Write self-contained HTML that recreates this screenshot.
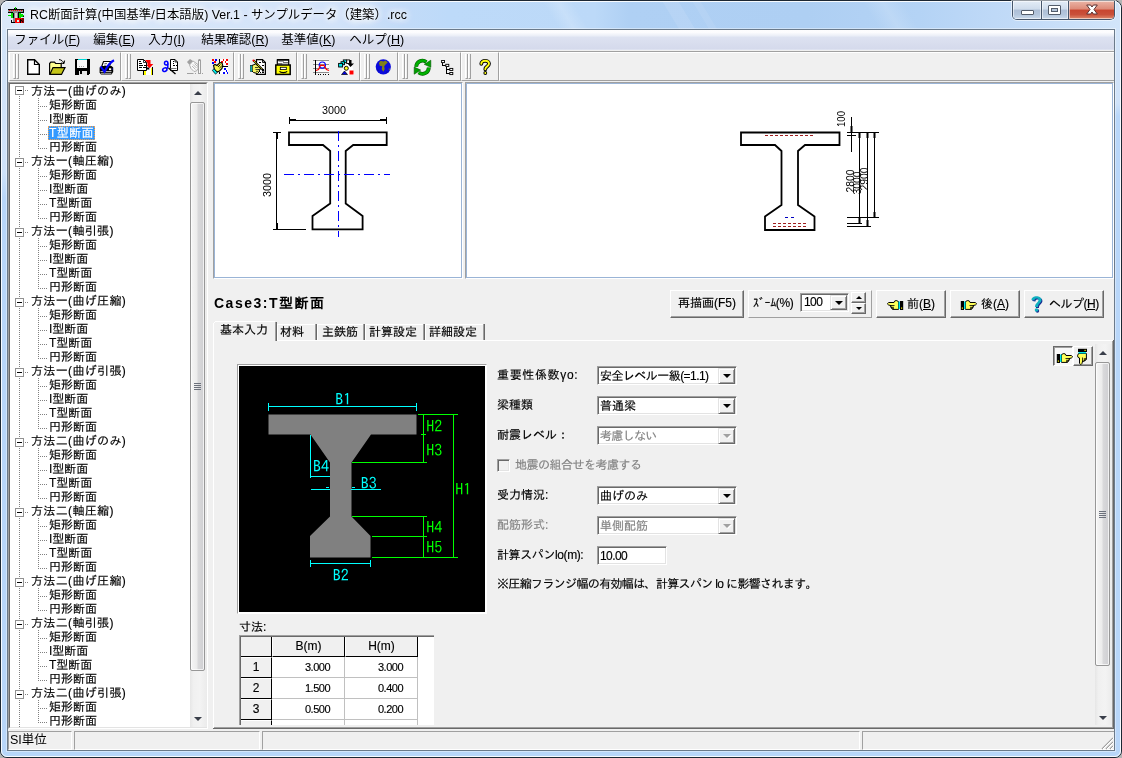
<!DOCTYPE html>
<html lang="ja">
<head>
<meta charset="utf-8">
<title>RC断面計算(中国基準/日本語版) Ver.1</title>
<style>
*{box-sizing:border-box;margin:0;padding:0}
html,body{width:1122px;height:758px;overflow:hidden;background:#b4b4b4}
body{will-change:transform;-webkit-text-stroke:.15px;font-family:"Liberation Sans","IPAGothic",sans-serif;font-size:12px;color:#000;position:relative;line-height:1}
div,span,svg,i,b,u{position:absolute;display:block;white-space:nowrap}
u{position:static;display:inline;text-decoration:underline}
#win{left:0;top:0;width:1122px;height:758px;border:1px solid #1c2733;border-radius:8px 8px 7px 7px;background:#b8d6f9;overflow:hidden}
#tbar{left:1px;top:1px;width:1120px;height:29px;overflow:hidden;border-radius:7px 7px 0 0;background:linear-gradient(90deg,#dce9f9 0,#d2e3f9 30%,#c2dbf8 36%,#bddaf9 40%,#bcd9f8 53%,#afd0f4 56%,#aecff3 72%,#b4d3f5 82%,#c4dcf8 92%,#d2e5fa 100%)}
#tbar i{top:-2px;height:34px;transform:skewX(31deg);transform-origin:0 0}
.fl{background:linear-gradient(#d2e4f9 0,#cfe2f9 85%,#b8d6f9 100%)}
#winhi{left:1px;top:1px;width:1120px;height:756px;border:1px solid rgba(255,255,255,.9);border-radius:7px 7px 6px 6px}
#ttl{-webkit-text-stroke:0;left:30px;top:5px;text-shadow:0 0 7px #fff,0 0 7px #fff,0 0 10px #fff,0 0 12px #fff;font-family:"Liberation Sans","Noto Sans CJK JP",sans-serif;font-size:12.400px;line-height:20px;color:#000}
#client{left:7px;top:29px;width:1108px;height:722px;border:1px solid #6b7a8a;background:#f0f0f0;box-shadow:0 0 0 1px rgba(255,255,255,.4)}
#menubar{left:8px;top:30px;width:1106px;height:20px;background:linear-gradient(#fdfdfe 0,#fcfcfe 12%,#e8ecf6 31%,#dde2f1 35%,#d5daec 93%,#e2e6f2 100%)}
.mi{-webkit-text-stroke:0;top:30px;height:20px;line-height:20px;font-family:"Liberation Sans","Noto Sans CJK JP",sans-serif;font-size:12.5px}
.ln{background:#a0a0a0}
.wl{background:#fff}
</style>
</head>
<body>
<div id="win"></div>
<div id="tbar"><i style="left:540px;width:30px;background:linear-gradient(90deg,rgba(255,255,255,0),rgba(255,255,255,.18) 50%,rgba(255,255,255,0))"></i><i style="left:660px;width:16px;background:rgba(255,255,255,.10)"></i><i style="left:690px;width:8px;background:rgba(255,255,255,.08)"></i><i style="left:860px;width:40px;background:linear-gradient(90deg,rgba(255,255,255,0),rgba(255,255,255,.15) 50%,rgba(255,255,255,0))"></i></div>
<div class="fl" style="left:2px;top:30px;width:5px;height:168px"></div>
<div class="fl" style="left:1115px;top:30px;width:5px;height:86px"></div>
<div id="winhi"></div>
<div id="ttl">RC断面計算(中国基準/日本語版) Ver.1 - サンプルデータ（建築）.rcc</div>
<div id="client"></div>
<svg style="left:8px;top:7px" width="16" height="16" viewBox="0 0 16 16" shape-rendering="crispEdges"><rect x="6" y="1" width="3" height="1" fill="#000"/><rect x="7" y="0" width="1" height="2" fill="#00e000"/><rect x="0" y="2" width="16" height="4" fill="#000"/><rect x="0" y="3" width="15" height="2" fill="#909090"/><path d="M1 3.500h14" stroke="#ff0000" stroke-width="1" stroke-dasharray="1 1"/><rect x="5" y="5" width="5" height="11" fill="#8c8c8c"/><rect x="7" y="6" width="1.500" height="9" fill="#d8d8d8"/><rect x="5" y="6" width="1" height="5" fill="#000"/><rect x="10" y="6" width="1" height="5" fill="#000"/><rect x="3" y="6" width="2" height="5" fill="#00e000"/><rect x="10.500" y="6" width="2" height="5" fill="#00e000"/><rect x="0" y="8" width="3" height="1" fill="#00e000"/><path d="M12 8.500h4M14 7v3" stroke="#00e000" stroke-width="1.400"/><rect x="15" y="8.500" width="1" height="1.500" fill="#000"/><path d="M3.500 13v2.500h4" fill="none" stroke="#000" stroke-width="1"/><rect x="7" y="11" width="9" height="5" fill="#ff0000"/><rect x="8.500" y="12.500" width="2" height="2" fill="#c8f0f0"/><path d="M12.500 16V12l2.500 3.500V11" fill="none" stroke="#000" stroke-width="1" shape-rendering="auto"/></svg>
<div id="menubar"></div>
<div class="mi" style="left:14.3px">ファイル(<u>F</u>)</div>
<div class="mi" style="left:93.3px">編集(<u>E</u>)</div>
<div class="mi" style="left:148.3px">入力(<u>I</u>)</div>
<div class="mi" style="left:201.3px">結果確認(<u>R</u>)</div>
<div class="mi" style="left:281.3px">基準値(<u>K</u>)</div>
<div class="mi" style="left:349.3px">ヘルプ(<u>H</u>)</div>
<style>
#cap{left:1012px;top:1px;width:103px;height:19px;border:1px solid #46566b;border-top:0;border-radius:0 0 5px 5px;overflow:hidden;box-shadow:0 0 0 1px rgba(255,255,255,.55)}
.cpb{top:0;height:18px;background:linear-gradient(#e3ecf6 0,#cfdcec 45%,#aebfd6 50%,#b4c6dc 75%,#cbdaeb 100%);box-shadow:inset 0 0 0 1px rgba(255,255,255,.55)}
#cpx{background:linear-gradient(#eab4a6 0,#dd8a78 45%,#c8452f 50%,#c9503a 75%,#de8a6c 100%)}
</style>
<div id="cap">
<div class="cpb" style="left:0;width:28px"></div>
<div class="cpb" style="left:29px;width:26px;"></div>
<div class="cpb" id="cpx" style="left:56px;width:46px"></div>
<i style="left:28px;top:0;width:1px;height:19px;background:#46566b"></i>
<i style="left:55px;top:0;width:1px;height:19px;background:#46566b"></i>
<i style="left:8px;top:9px;width:13px;height:5px;background:#fff;border:1px solid #535c6a;border-radius:1px"></i>
<i style="left:35px;top:4px;width:13px;height:10px;background:#fff;border:1px solid #535c6a;border-radius:1px"></i>
<i style="left:38px;top:7px;width:7px;height:4px;background:#b4c4d8;border:1px solid #535c6a"></i>
<svg style="left:73px;top:3px" width="12" height="11" viewBox="0 0 12 11"><path d="M.7 1H4.600L6 3L7.400 1H11.300L8 5.500L11.300 10H7.400L6 8L4.600 10H.7L4 5.500Z" fill="#fff" stroke="#5a3030" stroke-width="1"/></svg>
</div>
<style>
#treeborder{left:8px;top:82px;width:200px;height:647px;background:#fff;border:1px solid;border-color:#a0a0a0 #fff #fff #a0a0a0}
#treeborder:after{content:"";position:absolute;left:0;top:0;right:0;bottom:0;border:1px solid;border-color:#696969 #e3e3e3 #e3e3e3 #696969}
#tree{left:8px;top:84px;width:182px;height:643px;overflow:hidden;font-size:12px}
.tp{left:23px;height:14px;line-height:14px;letter-spacing:.35px}
.tc{left:40px;padding:0 1px;height:14px;line-height:14px}
.sel{background:#3399ff;color:#fff;letter-spacing:.4px;outline:1px dotted #f0a050;outline-offset:-1px}
.pb{left:7px;width:9px;height:9px;border:1px solid #919191;background:#fff}
.pb:after{content:"";position:absolute;left:1px;top:3px;width:5px;height:1px;background:#000}
.hd{height:1px;background:repeating-linear-gradient(90deg,#808080 0 1px,transparent 1px 2px)}
.vd{width:1px;background:repeating-linear-gradient(#808080 0 1px,transparent 1px 2px)}
</style>
<div id="treeborder"></div>
<div id="tree">
<i class="vd" style="left:11px;top:12px;height:632px"></i>
<i class="pb" style="top:2px"></i><i class="hd" style="left:17px;top:6px;width:4px"></i><div class="tp" style="top:0px">方法一(曲げのみ)</div>
<i class="hd" style="left:32px;top:22px;width:8px"></i><div class="tc" style="top:14px">矩形断面</div>
<i class="hd" style="left:32px;top:36px;width:8px"></i><div class="tc" style="top:28px">I型断面</div>
<i class="hd" style="left:32px;top:50px;width:8px"></i><div class="tc sel" style="top:42px">T型断面</div>
<i class="hd" style="left:32px;top:64px;width:8px"></i><div class="tc" style="top:56px">円形断面</div>
<i class="vd" style="left:30px;top:14px;height:51px"></i>
<i class="pb" style="top:74px"></i><i class="hd" style="left:17px;top:78px;width:4px"></i><div class="tp" style="top:70px">方法一(軸圧縮)</div>
<i class="hd" style="left:32px;top:92px;width:8px"></i><div class="tc" style="top:84px">矩形断面</div>
<i class="hd" style="left:32px;top:106px;width:8px"></i><div class="tc" style="top:98px">I型断面</div>
<i class="hd" style="left:32px;top:120px;width:8px"></i><div class="tc" style="top:112px">T型断面</div>
<i class="hd" style="left:32px;top:134px;width:8px"></i><div class="tc" style="top:126px">円形断面</div>
<i class="vd" style="left:30px;top:84px;height:51px"></i>
<i class="pb" style="top:144px"></i><i class="hd" style="left:17px;top:148px;width:4px"></i><div class="tp" style="top:140px">方法一(軸引張)</div>
<i class="hd" style="left:32px;top:162px;width:8px"></i><div class="tc" style="top:154px">矩形断面</div>
<i class="hd" style="left:32px;top:176px;width:8px"></i><div class="tc" style="top:168px">I型断面</div>
<i class="hd" style="left:32px;top:190px;width:8px"></i><div class="tc" style="top:182px">T型断面</div>
<i class="hd" style="left:32px;top:204px;width:8px"></i><div class="tc" style="top:196px">円形断面</div>
<i class="vd" style="left:30px;top:154px;height:51px"></i>
<i class="pb" style="top:214px"></i><i class="hd" style="left:17px;top:218px;width:4px"></i><div class="tp" style="top:210px">方法一(曲げ圧縮)</div>
<i class="hd" style="left:32px;top:232px;width:8px"></i><div class="tc" style="top:224px">矩形断面</div>
<i class="hd" style="left:32px;top:246px;width:8px"></i><div class="tc" style="top:238px">I型断面</div>
<i class="hd" style="left:32px;top:260px;width:8px"></i><div class="tc" style="top:252px">T型断面</div>
<i class="hd" style="left:32px;top:274px;width:8px"></i><div class="tc" style="top:266px">円形断面</div>
<i class="vd" style="left:30px;top:224px;height:51px"></i>
<i class="pb" style="top:284px"></i><i class="hd" style="left:17px;top:288px;width:4px"></i><div class="tp" style="top:280px">方法一(曲げ引張)</div>
<i class="hd" style="left:32px;top:302px;width:8px"></i><div class="tc" style="top:294px">矩形断面</div>
<i class="hd" style="left:32px;top:316px;width:8px"></i><div class="tc" style="top:308px">I型断面</div>
<i class="hd" style="left:32px;top:330px;width:8px"></i><div class="tc" style="top:322px">T型断面</div>
<i class="hd" style="left:32px;top:344px;width:8px"></i><div class="tc" style="top:336px">円形断面</div>
<i class="vd" style="left:30px;top:294px;height:51px"></i>
<i class="pb" style="top:354px"></i><i class="hd" style="left:17px;top:358px;width:4px"></i><div class="tp" style="top:350px">方法二(曲げのみ)</div>
<i class="hd" style="left:32px;top:372px;width:8px"></i><div class="tc" style="top:364px">矩形断面</div>
<i class="hd" style="left:32px;top:386px;width:8px"></i><div class="tc" style="top:378px">I型断面</div>
<i class="hd" style="left:32px;top:400px;width:8px"></i><div class="tc" style="top:392px">T型断面</div>
<i class="hd" style="left:32px;top:414px;width:8px"></i><div class="tc" style="top:406px">円形断面</div>
<i class="vd" style="left:30px;top:364px;height:51px"></i>
<i class="pb" style="top:424px"></i><i class="hd" style="left:17px;top:428px;width:4px"></i><div class="tp" style="top:420px">方法二(軸圧縮)</div>
<i class="hd" style="left:32px;top:442px;width:8px"></i><div class="tc" style="top:434px">矩形断面</div>
<i class="hd" style="left:32px;top:456px;width:8px"></i><div class="tc" style="top:448px">I型断面</div>
<i class="hd" style="left:32px;top:470px;width:8px"></i><div class="tc" style="top:462px">T型断面</div>
<i class="hd" style="left:32px;top:484px;width:8px"></i><div class="tc" style="top:476px">円形断面</div>
<i class="vd" style="left:30px;top:434px;height:51px"></i>
<i class="pb" style="top:494px"></i><i class="hd" style="left:17px;top:498px;width:4px"></i><div class="tp" style="top:490px">方法二(曲げ圧縮)</div>
<i class="hd" style="left:32px;top:512px;width:8px"></i><div class="tc" style="top:504px">矩形断面</div>
<i class="hd" style="left:32px;top:526px;width:8px"></i><div class="tc" style="top:518px">円形断面</div>
<i class="vd" style="left:30px;top:504px;height:23px"></i>
<i class="pb" style="top:536px"></i><i class="hd" style="left:17px;top:540px;width:4px"></i><div class="tp" style="top:532px">方法二(軸引張)</div>
<i class="hd" style="left:32px;top:554px;width:8px"></i><div class="tc" style="top:546px">矩形断面</div>
<i class="hd" style="left:32px;top:568px;width:8px"></i><div class="tc" style="top:560px">I型断面</div>
<i class="hd" style="left:32px;top:582px;width:8px"></i><div class="tc" style="top:574px">T型断面</div>
<i class="hd" style="left:32px;top:596px;width:8px"></i><div class="tc" style="top:588px">円形断面</div>
<i class="vd" style="left:30px;top:546px;height:51px"></i>
<i class="pb" style="top:606px"></i><i class="hd" style="left:17px;top:610px;width:4px"></i><div class="tp" style="top:602px">方法二(曲げ引張)</div>
<i class="hd" style="left:32px;top:624px;width:8px"></i><div class="tc" style="top:616px">矩形断面</div>
<i class="hd" style="left:32px;top:638px;width:8px"></i><div class="tc" style="top:630px">円形断面</div>
<i class="vd" style="left:30px;top:616px;height:23px"></i>
</div>
<style>
.tbl{top:51px;height:1px;left:8px;width:1106px;background:#a0a0a0}
.band{top:52px;height:29px;border-top:1px solid #fff;border-left:1px solid #fff;border-right:1px solid #a0a0a0;border-bottom:1px solid #a0a0a0}
.grip{top:54px;height:25px;width:3px;border-left:1px solid #fff;border-right:1px solid #a0a0a0;border-bottom:1px solid #a0a0a0}
.ic{top:59px;width:16px;height:16px;overflow:visible}
</style>
<div class="tbl"></div>
<div class="band" style="left:9px;width:112px"></div>
<div class="band" style="left:121px;width:113px"></div>
<div class="band" style="left:234px;width:63px"></div>
<div class="band" style="left:297px;width:63px"></div>
<div class="band" style="left:360px;width:38px"></div>
<div class="band" style="left:398px;width:63px"></div>
<div class="band" style="left:461px;width:38px"></div>
<div class="band" style="left:499px;width:615px;border-right:0"></div>
<i class="grip" style="left:13px"></i><i class="grip" style="left:16px"></i>
<i class="grip" style="left:125px"></i><i class="grip" style="left:128px"></i>
<i class="grip" style="left:238px"></i><i class="grip" style="left:241px"></i>
<i class="grip" style="left:301px"></i><i class="grip" style="left:304px"></i>
<i class="grip" style="left:364px"></i><i class="grip" style="left:367px"></i>
<i class="grip" style="left:402px"></i><i class="grip" style="left:405px"></i>
<i class="grip" style="left:465px"></i><i class="grip" style="left:468px"></i>
<!-- 1 new -->
<svg class="ic" style="left:27px" viewBox="0 0 16 16"><path d="M.7.7H7.500L12.300 5.500V15.300H.7Z" fill="#fff" stroke="#000" stroke-width="1.400"/><path d="M7.500.7V5.500H12.300" fill="none" stroke="#000" stroke-width="1.200"/></svg>
<!-- 2 open -->
<svg class="ic" style="left:49px" viewBox="0 0 16 16"><path d="M.6 15.300V4.500L1.800 3.200H5.500L6.600 4.500H12.200V8.500" fill="#ffff90" stroke="#000" stroke-width="1.200"/><path d="M.8 15.400L4 8.600H16L12.500 15.400Z" fill="#c4c418" stroke="#000" stroke-width="1.200"/><path d="M10 .6C12.500 .8 14 2.200 14.800 4.200M15.600 1.500L15 4.600L12 4" fill="none" stroke="#000" stroke-width="1"/></svg>
<!-- 3 save -->
<svg class="ic" style="left:75px" viewBox="0 0 16 16" shape-rendering="crispEdges"><path d="M0 0H14.600V15L13.600 16H0Z" fill="#000"/><rect x="2.300" y="1" width="9.700" height="8" fill="#f8f8f8"/><rect x="2.500" y="0" width="9.500" height="1" fill="#00d8d8"/><path d="M3.500 7.500h6.500" stroke="#a8a8a8" stroke-width="1" stroke-dasharray="1 1"/><rect x="4" y="11.500" width="7.500" height="4.500" fill="#e8e8e8"/><rect x="4.500" y="12" width="2" height="3" fill="#000"/></svg>
<!-- 4 print -->
<svg class="ic" style="left:99px" viewBox="0 0 16 16"><path d="M2.500 8L4.500 2.500H12L10.500 8Z" fill="#fff" stroke="#000" stroke-width="1.100"/><path d="M5.500 4.500h2.500M5 6.200h2.500" stroke="#666" stroke-width=".9"/><path d="M.6 8.500L2.500 7H12.500L14.200 8.500V13L12.500 15.400H2L.6 13.500Z" fill="#000"/><path d="M1.500 12.500H12.500M2 14.300H12.300" stroke="#c0c0c0" stroke-width=".9"/><rect x="10" y="9.300" width="2.200" height="1.800" fill="#fff"/><rect x="13" y="9.500" width="1" height="1" fill="#0000d0"/><path d="M1.600 7.500L5.500 12.800C8 7.500 10.500 3.500 15 1.200" fill="none" stroke="#0000ff" stroke-width="2.100"/></svg>
<!-- 5 paste -->
<svg class="ic" style="left:137px" viewBox="0 0 16 16"><g shape-rendering="crispEdges"><rect x="7" y="9" width="8" height="7" fill="#fff"/><rect x="7" y="9" width="1.500" height="7" fill="#ffff00"/><rect x="13.500" y="9" width="1.500" height="7" fill="#ffff00"/><rect x="6" y="11" width="1" height="5" fill="#000"/><rect x="15" y="8" width="1" height="8" fill="#000"/></g><path d="M.5.500H6.500L9.500 3.500V11.500H.5Z" fill="#fff" stroke="#000" stroke-width="1"/><path d="M6.500.5V3.500H9.500" fill="none" stroke="#000" stroke-width=".8"/><g stroke="#000" stroke-width="1" shape-rendering="crispEdges"><path d="M2 2.500h1.500M2 4.500h2.500M2 6.500h3.500M7 6.500h1.500M2 8.500h2.500M5.500 8.500h3"/></g><path d="M8 1H13.500V5H16.300L12.500 9.300L9.500 6H10.500V4Z" fill="#ff0000"/><path d="M9.800 8.500H12L12.500 10.500H9.800Z" fill="#000"/></svg>
<!-- 6 cut -->
<svg class="ic" style="left:162px" viewBox="0 0 16 16"><path d="M8.500.5H13L15.500 3V11.500H8.500Z" fill="#fff" stroke="#000" stroke-width="1"/><path d="M13 .5V3H15.500" fill="none" stroke="#000" stroke-width=".8"/><g stroke="#000" stroke-width="1.200" shape-rendering="crispEdges"><path d="M10.500 2.500h1.300M10.500 4.500h1.300M10.500 6.500h2M13.500 6.500h1"/></g><path d="M8.500 9.500H14.500" stroke="#777" stroke-width="1"/><path d="M6.500 9L13.500 15" stroke="#000" stroke-width="1.400"/><ellipse cx="4.200" cy="4.200" rx="1.700" ry="1.900" fill="none" stroke="#0000ff" stroke-width="1.500"/><ellipse cx="2.800" cy="10.700" rx="2.200" ry="1.700" fill="none" stroke="#0000ff" stroke-width="1.500" transform="rotate(-25 2.800 10.700)"/><path d="M5.800 4.500V8.500L4.800 9.500" stroke="#0000ff" stroke-width="1.500" fill="none"/></svg>
<!-- 7 disabled -->
<svg class="ic" style="left:187px" viewBox="0 0 16 16"><path d="M0 3L3 0L6 2L2.500 6Z" fill="#a0a0a0"/><path d="M2.500 6L6 2L11 5.500V9.500L9.500 12L7 12.500L4 9.500Z" fill="#fafafa" stroke="#a8a8a8" stroke-width=".9"/><path d="M6 5.500L9.500 9M5 7L8.500 10.500M7.500 4.500L10.500 7.500" stroke="#b0b0b0" stroke-width=".9" fill="none"/><rect x="11.500" y="1" width="2" height="13.500" fill="#fafafa" stroke="#a0a0a0" stroke-width="1"/><path d="M12.500 0V1" stroke="#a0a0a0"/><path d="M0 14.500H6.500M8 14.500h1M15 14.500h1" stroke="#a0a0a0" stroke-width="1"/></svg>
<!-- 8 hand -->
<svg class="ic" style="left:212px" viewBox="0 0 16 16"><rect x="7" y="0" width="9" height="15" fill="#fff"/><g shape-rendering="crispEdges"><path d="M0 0h1.700v1.700h-1.700zM2 2h1.700v1.700h-1.700zM10.700 0h1.700v1.700h-1.700zM14 0h1.700v1.700h-1.700zM9 2h1.700v1.700h-1.700zM12.500 2h1.700v1.700h-1.700zM14 4h1.700v1.700h-1.700z" fill="#ff0000"/><path d="M3 0h1.700v1.700h-1.700zM0 3h1.700v1.700h-1.700zM12 9h1.700v1.700h-1.700zM13.500 11h1.700v1.700h-1.700zM11 13h1.700v1.700h-1.700zM14.500 13h1.500v1.700h-1.500z" fill="#0000ff"/><path d="M7 0h1v4h-1zM10.500 7h5.500v1h-5.500zM7 12.500h1v2.500h-1z" fill="#000"/></g><path d="M1.500 6.500L3 5.500L5 6.500L8 3.500L10 4L10.800 6.500L10 9.500L7.500 12L5 13L2.500 10.500Z" fill="#f8f850" stroke="#000" stroke-width="1.100"/><path d="M6 8L8.500 5.500M7.500 9L9.800 6.800" stroke="#000" stroke-width=".9"/><path d="M.3 11.300L2 9.800L5.300 13.500L3.500 15.200Z" fill="#00e8e8" stroke="#000" stroke-width=".7"/></svg>
<!-- 9 edit doc -->
<svg class="ic" style="left:250px" viewBox="0 0 16 16"><path d="M6.500.6H12.500L15.400 3.500V15.400H6.500Z" fill="#fff" stroke="#000" stroke-width="1.200"/><path d="M12.500.6V3.500H15.400" fill="none" stroke="#000" stroke-width=".9"/><g stroke="#000" stroke-width="1" shape-rendering="crispEdges"><path d="M9 3.500h2M12 6.500h2M9.500 13.500h1.500M12 13.500h2M13 10.500h1"/></g><path d="M2 6.500L5.500 5L9.500 8L11 10L8.500 10.500L10 12L7.500 14.500L3.500 13.500L2 12Z" fill="#f4f464" stroke="#000" stroke-width="1"/><path d="M5 8.500H8.500M5.500 10.500H8.500M6 12.300H8.500" stroke="#000" stroke-width=".7"/><rect x=".3" y="6.300" width="1.700" height="6.400" fill="#00e8e8" stroke="#000" stroke-width=".5"/><path d="M3.500 1.500L12.500 10.500L13.500 12.500" stroke="#000" stroke-width="1.900" fill="none"/><path d="M4 2L12 10" stroke="#ffff00" stroke-width="1" stroke-dasharray="1.200 .7"/><circle cx="3.500" cy="1.500" r="1.100" fill="#ff0000"/></svg>
<!-- 10 drawer -->
<svg class="ic" style="left:275px" viewBox="0 0 16 16"><path d="M2.300 6.500V.8H13.700V6.500Z" fill="#fff" stroke="#000" stroke-width="1.200"/><rect x="2" y="0" width="12" height="1.500" fill="#000"/><path d="M3.500 2.500H9" stroke="#888" stroke-width=".8"/><path d="M8 3.800H13M3 4.800H7.500" stroke="#000" stroke-width=".8"/><rect x=".8" y="6" width="14.400" height="9.400" fill="#ffff00" stroke="#000" stroke-width="1.500"/><rect x="5.300" y="8.300" width="6" height="2.300" fill="#fff" stroke="#000" stroke-width=".8"/><path d="M4.500 12.300C5.500 14 11 14 12.200 12.300" fill="none" stroke="#000" stroke-width="1.100"/></svg>
<!-- 11 chart -->
<svg class="ic" style="left:313px" viewBox="0 0 16 16"><rect x="1" y=".5" width="15" height="14" fill="#fafafa"/><g shape-rendering="crispEdges"><path d="M0 1.500H16M0 5.500H16M0 9.500H16M0 13.500H16" stroke="#8c8c8c" stroke-width="1"/><path d="M2.500 1V15" stroke="#000" stroke-width="1"/><path d="M2 15.500h1M4.500 15.500h1M7 15.500h1M9.500 15.500h1M12 15.500h1M14.500 15.500h1" stroke="#000" stroke-width="1"/></g><circle cx="9.300" cy="6.100" r="3.100" fill="none" stroke="#0000ff" stroke-width="1.200"/><path d="M3 11.500L5.500 10.500L7.500 6.400H11L13.500 10.500L16 11.500" fill="none" stroke="#ff0000" stroke-width="1.200"/></svg>
<!-- 12 shapes -->
<svg class="ic" style="left:338px" viewBox="0 0 16 16"><path d="M7 5H14L16 16H2Z" fill="#fff"/><g fill="#00e8e8" stroke="#000" stroke-width=".9"><rect x="5.300" y=".9" width="3.200" height="2.800"/><rect x="3" y="2.700" width="3.500" height="3"/><rect x=".6" y="4.400" width="4" height="3.600"/></g><rect x="8.700" y=".9" width="2.800" height="3.600" fill="#fff" stroke="#000" stroke-width=".9"/><path d="M11.500 1H13.500V4.500H16L12.500 8L9.500 4.500H11.500Z" fill="#000"/><circle cx="8.300" cy="9.300" r="2" fill="#ffff20" stroke="#000" stroke-width=".9"/><path d="M3.500 15.500L6.500 12L9.500 15.500Z" fill="#0000e0" stroke="#000" stroke-width=".7"/><rect x="11.500" y="11.500" width="4" height="4" fill="#ff0000"/></svg>
<!-- 13 globe -->
<svg class="ic" style="left:375px;width:17px" viewBox="0 0 17 16"><circle cx="8.300" cy="7.800" r="7.600" fill="#0a0adc"/><path d="M4 4L5.500 1.800L8.500 2.600L10.500 1.600L12.800 3.600L10.800 5.200L9.200 7.200L9.700 10.200L8.200 12.700L6.700 10.200L7.200 7.200L4.700 6.700Z" fill="#808018"/><path d="M13.500 9.500L15 9.800L14.300 12Z" fill="#808018"/><path d="M2.500 9.500L3.800 11.500L2.800 12.500ZM11 12.500L12.500 13L11.500 14.200Z" fill="#101090"/></svg>
<!-- 14 refresh -->
<svg class="ic" style="left:414px;width:17px" viewBox="0 0 17 16"><g id="rfa"><path d="M2.200 7.800A6.300 6.300 0 0 1 12.300 2.900" stroke="#005800" stroke-width="3.800" fill="none"/><path d="M2.200 7.800A6.300 6.300 0 0 1 12.300 2.900" stroke="#00b000" stroke-width="2.600" fill="none"/><path d="M10.300 5.300L16.800 1.200V8.300Z" fill="#00a000" stroke="#005800" stroke-width=".6"/></g><g transform="rotate(180 8.500 8.200)"><path d="M2.200 7.800A6.300 6.300 0 0 1 12.300 2.900" stroke="#005800" stroke-width="3.800" fill="none"/><path d="M2.200 7.800A6.300 6.300 0 0 1 12.300 2.900" stroke="#00b000" stroke-width="2.600" fill="none"/><path d="M10.300 5.300L16.800 1.200V8.300Z" fill="#00a000" stroke="#005800" stroke-width=".6"/></g></svg>
<!-- 15 tree -->
<svg class="ic" style="left:441px" viewBox="0 0 16 16"><g fill="none" stroke="#000" stroke-width="1" shape-rendering="crispEdges"><path d="M1.500 4V6.500H4.500M5.500 8V14.500H8.500M5.500 10.500H8.500"/></g><g fill="#fff" stroke="#000" stroke-width=".9"><rect x=".6" y="1.500" width="2.900" height="2.100"/><rect x="4.800" y="5.300" width="3" height="2.200"/><rect x="8.800" y="9.400" width="3" height="2.100"/><rect x="8.800" y="13.500" width="3" height="2.100"/></g></svg>
<!-- 16 help -->
<svg class="ic" style="left:479px" viewBox="0 0 16 16"><g fill="none" stroke-linecap="round"><path d="M2.300 4.800C2.300 .8 10 .8 10 4.800C10 7.500 6.300 7.300 6.300 10.300" stroke="#000" stroke-width="3.800"/><path d="M2.300 4.800C2.300 .8 10 .8 10 4.800C10 7.500 6.300 7.300 6.300 10.300" stroke="#ffff10" stroke-width="1.900"/></g><circle cx="6.300" cy="14" r="1.900" fill="#000"/><circle cx="6.300" cy="14" r="1" fill="#ffff10"/></svg>
<style>
.sbtrack{background:linear-gradient(90deg,#e6e6e6 0,#f0f0f0 20%,#f3f3f3 60%,#ebebeb 100%)}
.sbthumb{border:1px solid #979797;border-radius:2px;background:linear-gradient(90deg,#f6f6f6 0,#ececec 45%,#d9d9db 55%,#cfcfd2 100%);box-shadow:inset 0 0 0 1px rgba(255,255,255,.7)}
.sbgrip{width:7px;height:7px;background:repeating-linear-gradient(#6c717c 0 1px,transparent 1px 2px)}
.arrup{width:0;height:0;border-left:4px solid transparent;border-right:4px solid transparent;border-bottom:4px solid #3a3f4a}
.arrdn{width:0;height:0;border-left:4px solid transparent;border-right:4px solid transparent;border-top:4px solid #3a3f4a}
.dpan{border:1px solid;border-color:#a0a0a0 #fff #fff #a0a0a0;background:#fff}
.dpan:after{content:"";position:absolute;left:0;top:0;right:0;bottom:0;border:1px solid #9ab4d6}
.dsvg{font-family:"Liberation Sans","IPAGothic",sans-serif}
</style>
<!-- tree scrollbar -->
<div class="sbtrack" style="left:190px;top:84px;width:17px;height:643px"></div>
<i class="arrup" style="left:194px;top:91px"></i>
<div class="sbthumb" style="left:190px;top:102px;width:15px;height:569px"></div>
<i class="sbgrip" style="left:194px;top:383px"></i>
<i class="arrdn" style="left:194px;top:717px"></i>
<!-- left drawing panel -->
<div class="dpan" style="left:213px;top:82px;width:250px;height:197px"></div>
<svg class="dsvg" style="left:215px;top:84px" width="246" height="193" viewBox="215 84 246 193">
<g fill="none" stroke="#000" stroke-width="1" shape-rendering="crispEdges">
<path d="M289.500 120.500H386.500M289.500 117V124M386.500 117V124M289.500 119.500H296M380 119.500H386.500"/>
<path d="M276.500 132.500V229.500M273 132.500H281M273 229.500H306M277.500 133V139M277.500 223V229"/>
</g>
<path d="M289 132.300H386.700V145H353.200L345.700 151V203.500L362.600 216V229.300H312.500V216L330.200 203.500V151L323 145H289Z" fill="none" stroke="#000" stroke-width="1.800"/>
<g stroke="#0000ff" stroke-width="1" shape-rendering="crispEdges" stroke-dasharray="10 4 2 4"><path d="M284 174.500H390M338.500 131V237"/></g>
<text x="334" y="113.500" font-size="11" text-anchor="middle" textLength="24" lengthAdjust="spacingAndGlyphs">3000</text>
<text transform="translate(271 185) rotate(-90)" font-size="11" text-anchor="middle" textLength="24" lengthAdjust="spacingAndGlyphs">3000</text>
</svg>
<!-- right drawing panel -->
<div class="dpan" style="left:465px;top:82px;width:649px;height:197px"></div>
<svg class="dsvg" style="left:467px;top:84px" width="645" height="193" viewBox="467 84 645 193">
<path d="M741 132.500H839.500V145H805L798 151V205L814.500 216.500V230H765V216.500L781.500 205V151L775 145H741Z" fill="none" stroke="#000" stroke-width="1.800"/>
<g stroke="#a02020" stroke-width="1" shape-rendering="crispEdges" stroke-dasharray="3 2"><path d="M765 135.500H815M773 223.500H807M773 226.500H807"/></g>
<path d="M785 217.500H788M791 217.500H794" stroke="#0000c0" stroke-width="1" shape-rendering="crispEdges"/>
<g fill="none" stroke="#000" stroke-width="1" shape-rendering="crispEdges">
<path d="M851.500 117V152M847 132.500H879M847 135.500H856"/>
<path d="M859.500 132.500V224M867.500 132.500V227M874.500 132.500V218"/>
<path d="M847 217.500H879M847 223.500H862M847 226.500H871"/>
</g>
<g stroke="#000" stroke-width="2"><path d="M851.500 126V132M859.500 133V138M859.500 218V224M867.500 133V138M867.500 220V226M874.500 133V138M874.500 212V217"/></g>
<text transform="translate(845 119) rotate(-90)" font-size="11" text-anchor="middle" textLength="16" lengthAdjust="spacingAndGlyphs">100</text>
<text transform="translate(854 181) rotate(-90)" font-size="11" text-anchor="middle" textLength="23" lengthAdjust="spacingAndGlyphs">2800</text>
<text transform="translate(861 183) rotate(-90)" font-size="11" text-anchor="middle" textLength="23" lengthAdjust="spacingAndGlyphs">3000</text>
<text transform="translate(868 179) rotate(-90)" font-size="11" text-anchor="middle" textLength="23" lengthAdjust="spacingAndGlyphs">2900</text>
</svg>
<style>
.btn{background:#f0f0f0;border:1px solid;border-color:#fff #696969 #696969 #fff;box-shadow:inset -1px -1px 0 #a0a0a0;text-align:center;font-size:12px}
.rais{border:1px solid;border-color:#fff #a0a0a0 #a0a0a0 #fff;background:#f0f0f0}
.sunk{border:1px solid;border-color:#a0a0a0 #fff #fff #a0a0a0;box-shadow:inset 1px 1px 0 #696969,inset -1px -1px 0 #e3e3e3;background:#fff}
.cbb{width:17px;height:16px;background:#f0f0f0;border:1px solid;border-color:#e3e3e3 #696969 #696969 #e3e3e3;box-shadow:inset 1px 1px 0 #fff,inset -1px -1px 0 #a0a0a0}
.cbb:after{content:"";position:absolute;left:4px;top:5px;border-left:4px solid transparent;border-right:4px solid transparent;border-top:4px solid #000}
.cbb.dis:after{border-top-color:#a0a0a0;filter:drop-shadow(1px 1px 0 #fff)}
.t12{font-size:12px;line-height:14px;height:14px}
#case{-webkit-text-stroke:0;left:214px;top:296px;font-size:14px;font-weight:bold;line-height:15px;letter-spacing:1.500px}
.tab{top:324px;height:17px;font-size:12px;line-height:16px}
.tsep{top:324px;width:2px;height:17px;border-left:1px solid #a0a0a0;border-right:1px solid #696969}
.ttop{top:324px;height:17px;border-top:1px solid #fff;border-left:1px solid #fff}
</style>
<div id="case">Case3:T型断面</div>
<div class="btn" style="left:670px;top:290px;width:74px;height:28px;line-height:25px">再描画(F5)</div>
<div class="rais" style="left:748px;top:290px;width:124px;height:28px"></div>
<div class="t12" style="left:753px;top:296px;letter-spacing:-.4px">ｽﾞｰﾑ(%)</div>
<div class="sunk" style="left:800px;top:293px;width:49px;height:19px"></div>
<div class="t12" style="left:804px;top:295px;letter-spacing:-.6px">100</div>
<i class="cbb" style="left:830px;top:295px;height:15px"></i>
<div class="btn" style="left:851px;top:292px;width:15px;height:11px"></div>
<div class="btn" style="left:851px;top:303px;width:15px;height:11px"></div>
<i style="left:856px;top:296px;border-left:3px solid transparent;border-right:3px solid transparent;border-bottom:3px solid #000"></i>
<i style="left:856px;top:307px;border-left:3px solid transparent;border-right:3px solid transparent;border-top:3px solid #000"></i>
<div class="btn" style="left:876px;top:290px;width:70px;height:28px"></div>
<div class="t12" style="left:907px;top:297px">前(<u>B</u>)</div>
<div class="btn" style="left:950px;top:290px;width:70px;height:28px"></div>
<div class="t12" style="left:981px;top:297px">後(<u>A</u>)</div>
<div class="btn" style="left:1024px;top:290px;width:80px;height:28px"></div>
<div class="t12" style="left:1049px;top:297px;letter-spacing:-.5px">ヘルプ(<u>H</u>)</div>
<!-- hand icons -->
<svg style="left:887px;top:300px" width="17" height="11" viewBox="0 0 17 11"><g><path d="M.6 3.600L1.600 2.500H7L7.600 1.100L9.200.5L11.500 1.500V9.400H5.600L4.600 8.600L5 7.500L3.600 7L4 5.600L1.600 5L.6 4.200Z" fill="#ffff58" stroke="#000" stroke-width="1"/><path d="M4 5.500H7.500M3.600 7.300H7M5 8.600H7" stroke="#000" stroke-width=".8"/><rect x="11.500" y="1.500" width="1.600" height="7.500" fill="#00e8e8"/><rect x="13" y="1" width="3.200" height="9" fill="#000"/><rect x="14" y="7.500" width="1.200" height="1.200" fill="#ffff00"/></g></svg>
<svg style="left:960px;top:300px" width="17" height="11" viewBox="0 0 17 11"><g transform="translate(17 0) scale(-1 1)"><path d="M.6 3.600L1.600 2.500H7L7.600 1.100L9.200.5L11.500 1.500V9.400H5.600L4.600 8.600L5 7.500L3.600 7L4 5.600L1.600 5L.6 4.200Z" fill="#ffff58" stroke="#000" stroke-width="1"/><path d="M4 5.500H7.500M3.600 7.300H7M5 8.600H7" stroke="#000" stroke-width=".8"/><rect x="11.500" y="1.500" width="1.600" height="7.500" fill="#00e8e8"/><rect x="13" y="1" width="3.200" height="9" fill="#000"/><rect x="14" y="7.500" width="1.200" height="1.200" fill="#ffff00"/></g></svg>
<svg style="left:1030px;top:295px" width="14" height="18" viewBox="0 0 14 18"><g transform="translate(.9 .9)" fill="#182c90"><path d="M1.500 5C1.500 0 11.500 0 11.500 5C11.500 8 8 8.500 8 12H5C5 8 8.500 7.500 8.500 5C8.500 3 4.500 3 4.500 5.500Z"/><circle cx="6.500" cy="15" r="1.800"/></g><g fill="#10b0c0"><path d="M1.500 5C1.500 0 11.500 0 11.500 5C11.500 8 8 8.500 8 12H5C5 8 8.500 7.500 8.500 5C8.500 3 4.500 3 4.500 5.500Z"/><circle cx="6.500" cy="15" r="1.800"/></g></svg>
<!-- tabs -->
<div class="wl" style="left:215px;top:321px;width:60px;height:1px"></div><i style="left:214px;top:322px;width:1px;height:1px;background:#fff"></i>
<div class="wl" style="left:213px;top:323px;width:1px;height:19px"></div>
<div class="tab" style="left:220px;top:322px">基本入力</div>
<i class="tsep" style="left:275px;top:322px;height:19px"></i>
<div class="tab" style="left:280px">材料</div><i class="tsep" style="left:315px"></i><i class="ttop" style="left:277px;width:38px"></i>
<div class="tab" style="left:322px">主鉄筋</div><i class="tsep" style="left:363px"></i><i class="ttop" style="left:317px;width:46px"></i>
<div class="tab" style="left:369px">計算設定</div><i class="tsep" style="left:423px"></i><i class="ttop" style="left:365px;width:58px"></i>
<div class="tab" style="left:429px">詳細設定</div><i class="tsep" style="left:483px"></i><i class="ttop" style="left:425px;width:58px"></i>
<div class="wl" style="left:277px;top:340px;width:836px;height:1px"></div>
<div class="wl" style="left:213px;top:340px;width:1px;height:388px"></div>
<div class="ln" style="left:1112px;top:341px;width:1px;height:387px"></div><div style="left:1113px;top:340px;width:1px;height:389px;background:#696969"></div>
<div class="ln" style="left:214px;top:727px;width:899px;height:1px"></div><div style="left:213px;top:728px;width:901px;height:1px;background:#696969"></div>
<style>
.lbl{left:497px;font-size:12px;line-height:14px;height:14px;margin-top:-1px}
.cmb{left:597px;width:140px;height:19px}
.cmt{left:600px;font-size:12px;line-height:14px;height:14px}
.gray{color:#838383}
.cb2{left:718px}
.dg{font-family:"IPAGothic","Liberation Sans",sans-serif;font-size:16px}
.gh{background:#f0f0f0;border:1px solid;border-color:#fff #000 #000 #fff;text-align:center;font-size:12px;line-height:19px}
.gc{background:#fff;border-right:1px solid #c0c0c0;border-bottom:1px solid #c0c0c0;text-align:right;font-size:11px;line-height:20px;padding-right:14px;letter-spacing:-.5px}
</style>
<!-- small hand toggle buttons -->
<div class="sunk" style="left:1053px;top:346px;width:20px;height:20px;background:#f8f8f8;border-color:#696969 #fff #fff #696969;box-shadow:inset 1px 1px 0 #a0a0a0"></div>
<div class="btn" style="left:1073px;top:346px;width:20px;height:20px"></div>
<svg style="left:1056px;top:353px" width="17" height="11" viewBox="0 0 17 11"><g transform="translate(17 0) scale(-1 1)"><path d="M.6 3.600L1.600 2.500H7L7.600 1.100L9.200.5L11.500 1.500V9.400H5.600L4.600 8.600L5 7.500L3.600 7L4 5.600L1.600 5L.6 4.200Z" fill="#ffff58" stroke="#000" stroke-width="1"/><path d="M4 5.500H7.500M3.600 7.300H7M5 8.600H7" stroke="#000" stroke-width=".8"/><rect x="11.500" y="1.500" width="1.600" height="7.500" fill="#00e8e8"/><rect x="13" y="1" width="3.200" height="9" fill="#000"/><rect x="14" y="7.500" width="1.200" height="1.200" fill="#ffff00"/></g></svg>
<svg style="left:1077px;top:348px" width="11" height="17" viewBox="0 0 11 17"><g transform="translate(0 17) rotate(-90)"><path d="M.6 3.600L1.600 2.500H7L7.600 1.100L9.200.5L11.500 1.500V9.400H5.600L4.600 8.600L5 7.500L3.600 7L4 5.600L1.600 5L.6 4.200Z" fill="#ffff58" stroke="#000" stroke-width="1"/><path d="M4 5.500H7.500M3.600 7.300H7M5 8.600H7" stroke="#000" stroke-width=".8"/><rect x="11.500" y="1.500" width="1.600" height="7.500" fill="#00e8e8"/><rect x="13" y="1" width="3.200" height="9" fill="#000"/><rect x="14" y="7.500" width="1.200" height="1.200" fill="#ffff00"/></g></svg>
<!-- content scrollbar -->
<div class="sbtrack" style="left:1095px;top:344px;width:17px;height:381px"></div>
<i class="arrup" style="left:1099px;top:351px"></i>
<div class="sbthumb" style="left:1095px;top:362px;width:15px;height:304px"></div>
<i class="sbgrip" style="left:1099px;top:511px"></i>
<i class="arrdn" style="left:1099px;top:716px"></i>
<!-- black diagram -->
<div style="left:237px;top:364px;width:250px;height:250px;border:1px solid;border-color:#a0a0a0 #fff #fff #a0a0a0;background:#000;box-shadow:inset 0 0 0 1px #fff"></div>
<svg class="dg" style="left:239px;top:366px" width="246" height="246" viewBox="239 366 246 246">
<path d="M268.500 414.500H416.500V434.500H371L351.500 462.500V516.500L370.500 536V557.500H310V536L330 516.500V462.500L310.500 434.500H268.500Z" fill="#808080"/>
<g fill="none" stroke="#00ffff" stroke-width="1" shape-rendering="crispEdges">
<path d="M268.500 406.500H416.500M268.500 403V411M416.500 403V411"/>
<path d="M310.500 563.500H370.500M310.500 560V567M370.500 560V567"/>
<path d="M310.500 435V478M310.500 476.500H330"/>
<path d="M310.500 489.500H330M351 489.500H381M326 487.500h3M352 487.500h3"/>
</g>
<g fill="none" stroke="#00ff00" stroke-width="1" shape-rendering="crispEdges">
<path d="M418 414.500H458M352 462.500H427M352 516.500H427M372 536.500H427M372 557.500H458"/>
<path d="M423.500 414.500V462.500M423.500 516.500V557.500M453.500 414.500V557.500"/>
<path d="M421 434.500h5M421 536.500h5"/>
</g>
<g fill="#00ffff" text-anchor="middle"><text x="343.200" y="404.500">B1</text><text x="340.800" y="580.500">B2</text><text x="321" y="472">B4</text><text x="368.800" y="488.500">B3</text></g>
<g fill="#00ff00" text-anchor="middle"><text x="434.300" y="431.500">H2</text><text x="434.300" y="456">H3</text><text x="434.300" y="533">H4</text><text x="434.300" y="553">H5</text><text x="463.200" y="494.500">H1</text></g>
</svg>
<!-- form -->
<div class="lbl" style="top:369px;letter-spacing:.65px">重要性係数γo:</div>
<div class="sunk cmb" style="top:366px"></div><div class="cmt" style="top:369px;letter-spacing:-.55px">安全レベル一級(=1.1)</div><i class="cbb cb2" style="top:368px"></i>
<div class="lbl" style="top:399px">梁種類</div>
<div class="sunk cmb" style="top:396px"></div><div class="cmt" style="top:399px">普通梁</div><i class="cbb cb2" style="top:398px"></i>
<div class="lbl" style="top:429px">耐震レベル：</div>
<div class="sunk cmb" style="top:426px"></div><div class="cmt gray" style="top:429px;letter-spacing:-.7px">考慮しない</div><i class="cbb cb2 dis" style="top:428px"></i>
<div class="sunk" style="left:497px;top:459px;width:13px;height:13px;background:#f0f0f0"></div>
<div class="lbl gray" style="left:515px;top:459px;letter-spacing:-.5px">地震の組合せを考慮する</div>
<div class="lbl" style="top:489px">受力情況:</div>
<div class="sunk cmb" style="top:486px"></div><div class="cmt" style="top:489px">曲げのみ</div><i class="cbb cb2" style="top:488px"></i>
<div class="lbl gray" style="top:519px">配筋形式:</div>
<div class="sunk cmb" style="top:516px"></div><div class="cmt gray" style="top:519px">単側配筋</div><i class="cbb cb2 dis" style="top:518px"></i>
<div class="lbl" style="top:549px;letter-spacing:-.4px">計算スパンlo(m):</div>
<div class="sunk" style="left:597px;top:546px;width:70px;height:19px"></div><div class="cmt" style="top:549px;letter-spacing:-.6px">10.00</div>
<div class="lbl" style="top:578px;letter-spacing:-.65px">※圧縮フランジ幅の有効幅は、計算スパン lo に影響されます。</div>
<!-- table -->
<div class="lbl" style="left:239px;top:621px">寸法:</div>
<div style="left:239px;top:635px;width:195px;height:90px;background:#fff;border-top:1px solid #a0a0a0;border-left:1px solid #a0a0a0;overflow:hidden">
<div class="gh" style="left:0;top:0;width:32px;height:21px"></div>
<div class="gh" style="left:32px;top:0;width:73px;height:21px">B(m)</div>
<div class="gh" style="left:105px;top:0;width:73px;height:21px">H(m)</div>
<div class="gh" style="left:0;top:21px;width:32px;height:21px">1</div><div class="gc" style="left:32px;top:21px;width:73px;height:21px">3.000</div><div class="gc" style="left:105px;top:21px;width:73px;height:21px">3.000</div>
<div class="gh" style="left:0;top:42px;width:32px;height:21px">2</div><div class="gc" style="left:32px;top:42px;width:73px;height:21px">1.500</div><div class="gc" style="left:105px;top:42px;width:73px;height:21px">0.400</div>
<div class="gh" style="left:0;top:63px;width:32px;height:21px">3</div><div class="gc" style="left:32px;top:63px;width:73px;height:21px">0.500</div><div class="gc" style="left:105px;top:63px;width:73px;height:21px">0.200</div>
<div class="gh" style="left:0;top:84px;width:32px;height:21px"></div><div class="gc" style="left:32px;top:84px;width:73px;height:21px"></div><div class="gc" style="left:105px;top:84px;width:73px;height:21px"></div>
<i style="left:0;top:0;width:195px;height:1px;background:#696969"></i><i style="left:0;top:0;width:1px;height:90px;background:#696969"></i>
</div>
<style>
.stp{top:731px;height:19px;border:1px solid;border-color:#a0a0a0 #fff #fff #a0a0a0}
#sit{-webkit-text-stroke:0;left:10px;top:733px;font-family:"Liberation Sans","Noto Sans CJK JP",sans-serif;font-size:12.500px;line-height:15px}
</style>
<div class="stp" style="left:8px;width:64px"></div>
<div class="stp" style="left:74px;width:186px"></div>
<div class="stp" style="left:262px;width:598px"></div>
<div class="stp" style="left:862px;width:252px;border-right:0"></div>
<div id="sit">SI単位</div>
<svg style="left:1101px;top:737px" width="13" height="13" viewBox="0 0 13 13"><path d="M12 1L1 12M12 5L5 12M12 9L9 12" stroke="#a0a0a0" stroke-width="1.300"/><path d="M13 1L2 12M13 5L6 12M13 9L10 12" stroke="#fff" stroke-width="1"/></svg>
</body>
</html>
